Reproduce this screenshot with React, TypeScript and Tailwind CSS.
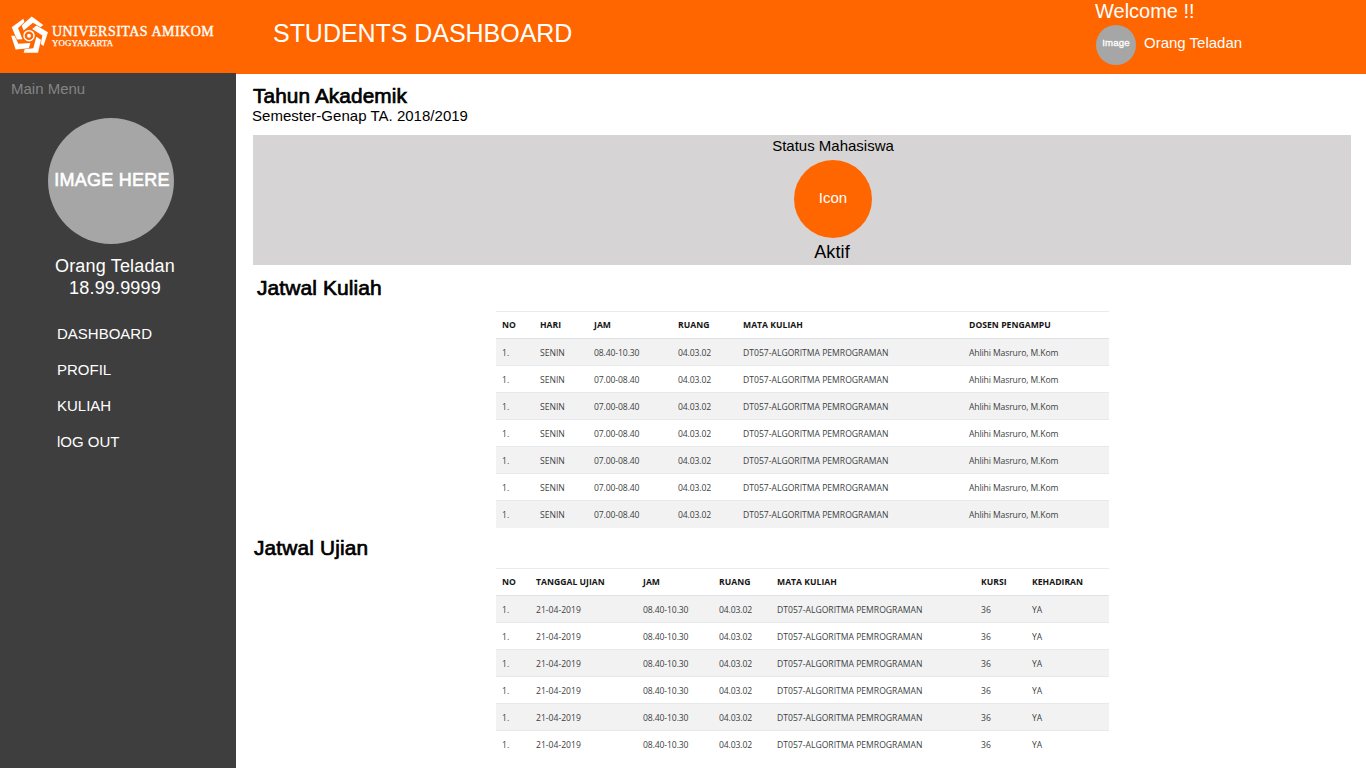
const scheduleHead = ['NO', 'HARI', 'JAM', 'RUANG', 'MATA KULIAH', 'DOSEN PENGAMPU'];
const times = ['08.40-10.30', '07.00-08.40', '07.00-08.40', '07.00-08.40', '07.00-08.40', '07.00-08.40', '07.00-08.40'];
const scheduleRows = times.map((t) => ['1.', 'SENIN', t, '04.03.02', 'DT057-ALGORITMA PEMROGRAMAN', 'Ahlihi Masruro, M.Kom']);

const examHead = ['NO', 'TANGGAL UJIAN', 'JAM', 'RUANG', 'MATA KULIAH', 'KURSI', 'KEHADIRAN'];
const examRows = Array.from({ length: 6 }, () => ['1.', '21-04-2019', '08.40-10.30', '04.03.02', 'DT057-ALGORITMA PEMROGRAMAN', '36', 'YA']);

const menu = ['DASHBOARD', 'PROFIL', 'KULIAH', 'lOG OUT'];

function Emblem() {
  return (
    <svg width="36" height="36" viewBox="0 0 108 108" className="block overflow-visible" fill="#fff">
      <g transform="translate(54 56)">
        {[0, 72, 144, 216, 288].map((angle) => (
          <path key={angle} transform={`rotate(${angle})`} d="M-13 41 L-16 51 L27 51 L36 12 L22 3 L13 38 Z" />
        ))}
        <circle r="15" fill="none" stroke="#fff" strokeWidth="4.5" />
        <circle r="6" />
      </g>
    </svg>
  );
}

function DataTable({ head, rows, columns }: { head: string[]; rows: string[][]; columns: string }) {
  return (
    <div className="ml-[260px] w-[613px] border-t border-[#e9eaeb] font-['Open_Sans','Noto_Sans',sans-serif] text-[8.6px] leading-[26px] whitespace-nowrap">
      <div className={`grid h-[27px] border-b border-[#dee2e6] pl-[6px] pt-px font-bold leading-[25px] tracking-[0.03px] text-[#151515] ${columns}`}>
        {head.map((cell) => (
          <span key={cell}>{cell}</span>
        ))}
      </div>
      {rows.map((row, i) => (
        <div
          key={i}
          className={`grid h-[27px] border-b border-[#e6e8ea] pl-[6px] pt-px text-[#3c3f42] last:border-transparent ${columns} ${i % 2 === 0 ? 'bg-[#f2f2f2]' : 'bg-white'}`}
        >
          {row.map((cell, j) => (
            <span key={j} className={/^[0A]/.test(cell) ? 'tracking-[-0.11px]' : ''}>{cell}</span>
          ))}
        </div>
      ))}
    </div>
  );
}

export default function App() {
  return (
    <div className="flex h-[768px] w-[1366px] flex-col overflow-hidden bg-white font-['Liberation_Sans',Arial,sans-serif]">
      <header className="flex h-[74px] shrink-0 bg-[#ff6600] text-white">
        <div className="flex w-[273px] pl-[11px] pt-[17px]">
          <Emblem />
          <div className="pl-[5px] pt-[7px] font-['Liberation_Serif',serif] whitespace-nowrap">
            <div className="text-[14px] leading-[16px] tracking-[0.5px] [-webkit-text-stroke:0.35px_white]">UNIVERSITAS AMIKOM</div>
            <div className="text-[8.8px] leading-[6px] tracking-[0.15px] [-webkit-text-stroke:0.25px_white]">YOGYAKARTA</div>
          </div>
        </div>
        <h1 className="w-[822px] pt-[19px] text-[25px] leading-[28px] tracking-[-0.04px]">STUDENTS DASHBOARD</h1>
        <div>
          <div className="text-[20px] leading-[23px]">Welcome !!</div>
          <div className="flex items-center pl-px pt-[2px]">
            <div className="flex size-[40px] items-center justify-center rounded-full bg-[#a6a6a6] pb-[3px] text-[9.6px] tracking-[0.2px] [-webkit-text-stroke:0.3px_white]">Image</div>
            <div className="pb-[5px] pl-[8px] text-[15px] leading-[17px]">Orang Teladan</div>
          </div>
        </div>
      </header>
      <div className="flex min-h-0 flex-1">
        <aside className="-mt-px w-[236px] shrink-0 bg-[#3e3e3e] text-white">
          <div className="pl-[11px] pt-[7px] text-[15px] leading-[18px] text-[#848484]">Main Menu</div>
          <div className="ml-[48px] mt-[20px] flex size-[126px] items-center justify-center rounded-full bg-[#a6a6a6] pl-[2px] pb-[2px] text-[18px] tracking-[0.25px] whitespace-nowrap [-webkit-text-stroke:0.6px_white]">
            IMAGE HERE
          </div>
          <div className="w-[230px] pt-[11px] text-center text-[18px] leading-[22px] tracking-[0.17px]">
            <div>Orang Teladan</div>
            <div>18.99.9999</div>
          </div>
          <nav className="flex flex-col gap-[18px] pl-[57px] pt-[26px] text-[15px] leading-[18px]">
            {menu.map((item) => (
              <a key={item}>{item}</a>
            ))}
          </nav>
        </aside>
        <main className="min-w-0 flex-1">
          <div className="pl-[17px] pt-[11px]">
            <h2 className="text-[20.8px] leading-[22px] tracking-[0.1px] [-webkit-text-stroke:0.7px_black]">Tahun Akademik</h2>
            <p className="-ml-px text-[15px] leading-[17px] tracking-[0.02px]">Semester-Genap TA. 2018/2019</p>
          </div>
          <section className="ml-[17px] mt-[11px] flex h-[130px] w-[1098px] flex-col items-center bg-[#d6d4d5] pl-[62px] pt-[2px]">
            <div className="text-[15px] leading-[18px]">Status Mahasiswa</div>
            <div className="mt-[5px] flex size-[78px] items-center justify-center rounded-full bg-[#ff6600] pb-[2px] text-[15px] text-white">Icon</div>
            <div className="mt-[3px] pr-[2px] text-[18px] leading-[22px] tracking-[0.1px]">Aktif</div>
          </section>
          <h2 className="h-[46px] pl-[21px] pt-[11px] text-[21px] leading-[24px] tracking-[0.08px] [-webkit-text-stroke:0.7px_black]">Jatwal Kuliah</h2>
          <DataTable
            head={scheduleHead}
            rows={scheduleRows}
            columns="grid-cols-[38px_54px_84px_65px_226px_1fr]"
          />
          <h2 className="h-[40px] pl-[18px] pt-[8px] text-[20.8px] leading-[24px] tracking-[0.18px] [-webkit-text-stroke:0.7px_black]">Jatwal Ujian</h2>
          <DataTable
            head={examHead}
            rows={examRows}
            columns="grid-cols-[34px_107px_76px_58px_204px_51px_1fr]"
          />
        </main>
      </div>
    </div>
  );
}
